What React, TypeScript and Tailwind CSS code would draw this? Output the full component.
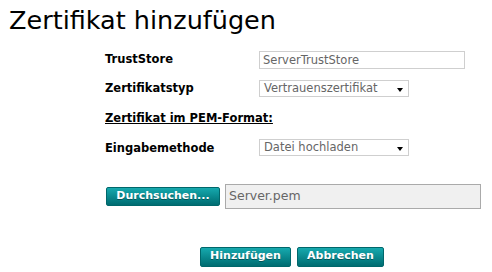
const btn =
  "rounded-[2px] border border-[#00676b] bg-gradient-to-b from-[#16a9ae] to-[#006c71] text-[11px] font-bold text-white [text-shadow:0_1px_0_rgba(0,0,0,0.35)]";

function FakeSelect({ value }: { value: string }) {
  return (
    <div className="flex h-[17px] w-[150px] items-center justify-between border border-[#cfcfcf] bg-white pl-[4px] pr-[5px] text-[11.5px] text-[#666]">
      <span>{value}</span>
      <span className="mt-[3px] h-0 w-0 border-x-[3.5px] border-t-[4px] border-x-transparent border-t-black" />
    </div>
  );
}

export default function App() {
  return (
    <div className="h-[272px] w-[492px] bg-white font-['DejaVu_Sans',Verdana,sans-serif] text-black">
      <h1 className="pl-[9px] pt-[5px] text-[25.5px] leading-[31px]">Zertifikat hinzufügen</h1>

      <div className="ml-[105px] mt-[15px] flex flex-col">
        {/* TrustStore */}
        <div className="flex h-[18px] items-center">
          <label className="w-[154px] text-[11.5px] font-bold">TrustStore</label>
          <input
            readOnly
            value="ServerTrustStore"
            className="h-[18px] w-[206px] border border-[#cfcfcf] px-[3px] text-[11.5px] text-[#666] outline-none"
          />
        </div>

        {/* Zertifikatstyp */}
        <div className="mt-[11px] flex items-center">
          <label className="w-[154px] text-[11.5px] font-bold">Zertifikatstyp</label>
          <FakeSelect value="Vertrauenszertifikat" />
        </div>

        <p className="mt-[14px] text-[11.5px] font-bold leading-[14px] underline">
          Zertifikat im PEM-Format:
        </p>

        {/* Eingabemethode */}
        <div className="mt-[14px] flex items-start">
          <label className="w-[154px] pt-[1px] text-[11.5px] font-bold">Eingabemethode</label>
          <FakeSelect value="Datei hochladen" />
        </div>

        {/* Datei */}
        <div className="mt-[26px] flex items-center">
          <button className={`${btn} ml-[1px] h-[19px] w-[114px]`}>Durchsuchen...</button>
          <div className="ml-[5px] flex h-[25px] w-[256px] items-center border border-[#aaa] bg-[#f0f0f0] px-[3px] text-[12.5px] text-[#666]">
            Server.pem
          </div>
        </div>
      </div>

      <div className="mt-[38px] flex gap-[6px] pl-[200px]">
        <button className={`${btn} h-[20px] w-[91px]`}>Hinzufügen</button>
        <button className={`${btn} h-[20px] w-[87px]`}>Abbrechen</button>
      </div>
    </div>
  );
}
